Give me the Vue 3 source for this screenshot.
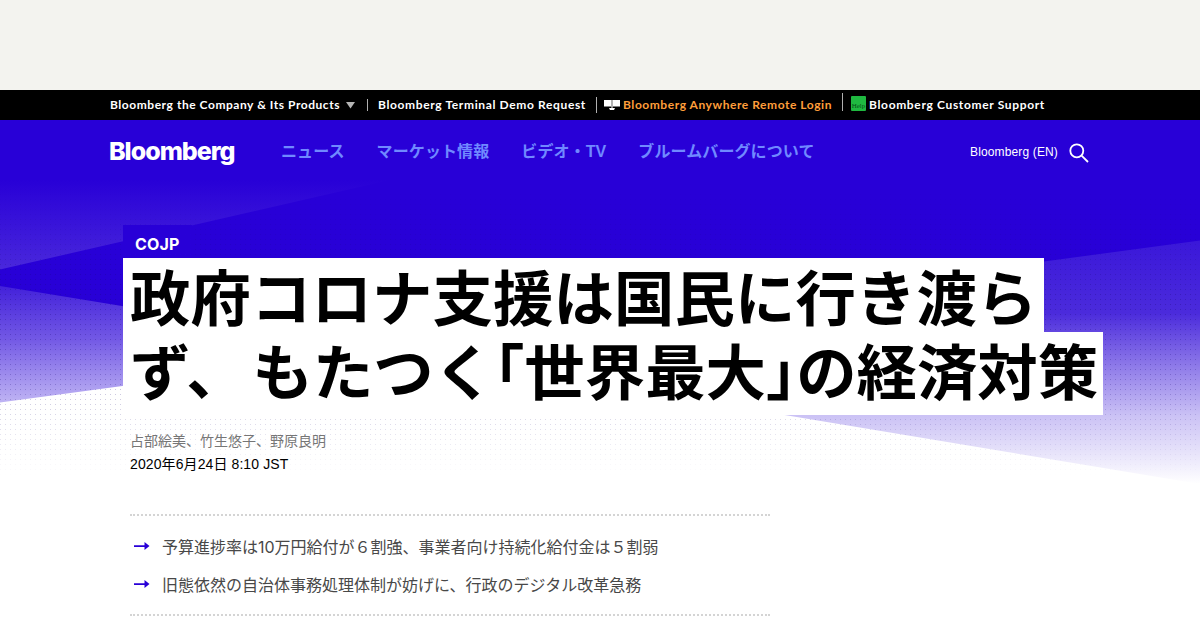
<script setup>
const navLinks = ['ニュース', 'マーケット情報', 'ビデオ・TV', 'ブルームバーグについて']

const highlights = [
  '予算進捗率は10万円給付が６割強、事業者向け持続化給付金は５割弱',
  '旧態依然の自治体事務処理体制が妨げに、行政のデジタル改革急務',
]
</script>

<template>
  <div class="page">
    <div class="ad-slot"></div>

    <div class="topbar">
      <a class="top-link products">Bloomberg the Company &amp; Its Products</a>
      <svg class="caret" width="9" height="7" viewBox="0 0 9 7"><path d="M0 0h9L4.5 6.5z" fill="#b4b4b4"/></svg>
      <i class="divider short"></i>
      <a class="top-link demo">Bloomberg Terminal Demo Request</a>
      <i class="divider"></i>
      <svg class="monitor" width="16" height="10" viewBox="0 0 16 10">
        <path d="M0 0h7.700v6.500H0zM8.300 0H16v6.500H8.300z" fill="#fff"/>
        <path d="M7.500 6h1v2h-1zM5 8h6l-1 2H6z" fill="#fff"/>
      </svg>
      <a class="top-link anywhere">Bloomberg Anywhere Remote Login</a>
      <i class="divider tall"></i>
      <span class="help">Help</span>
      <a class="top-link support">Bloomberg Customer Support</a>
    </div>

    <div class="hero">
      <svg class="hero-bg" width="1200" height="370" viewBox="0 120 1200 370">
        <defs>
          <linearGradient id="fadeTop" gradientUnits="userSpaceOnUse" x1="0" y1="180" x2="0" y2="270">
            <stop offset="0" stop-color="#2800d7"/>
            <stop offset="1" stop-color="#4a28dc"/>
          </linearGradient>
          <linearGradient id="fadeLeft" gradientUnits="userSpaceOnUse" x1="0" y1="286" x2="0" y2="403">
            <stop offset="0" stop-color="#4321da"/>
            <stop offset=".45" stop-color="#7258e5"/>
            <stop offset="1" stop-color="#c0b5f4"/>
          </linearGradient>
          <linearGradient id="fadeRight" gradientUnits="userSpaceOnUse" x1="0" y1="240" x2="0" y2="484">
            <stop offset="0" stop-color="#3a17d9"/>
            <stop offset=".3" stop-color="#4b2bdc"/>
            <stop offset=".5" stop-color="#8974e8"/>
            <stop offset=".72" stop-color="#cbc2f5"/>
            <stop offset="1" stop-color="#fff"/>
          </linearGradient>
          <linearGradient id="dotFade" gradientUnits="userSpaceOnUse" x1="0" y1="180" x2="0" y2="476">
            <stop offset="0" stop-color="#fff" stop-opacity="0"/>
            <stop offset=".4" stop-color="#fff"/>
            <stop offset=".7" stop-color="#fff" stop-opacity=".8"/>
            <stop offset="1" stop-color="#fff" stop-opacity="0"/>
          </linearGradient>
          <pattern id="dots" width="5" height="5" patternUnits="userSpaceOnUse">
            <rect x="0" y="4" width="1" height="1" fill="#1a0a70" fill-opacity=".3"/>
          </pattern>
          <mask id="dotMask"><rect y="180" width="1200" height="296" fill="url(#dotFade)"/></mask>
        </defs>
        <path d="M0 120H1200V242L390 351L0 288z" fill="#2800d7"/>
        <path d="M0 286V402.500L390 350z" fill="url(#fadeLeft)"/>
        <path d="M390 349.500L1200 240.500V484z" fill="url(#fadeRight)"/>
        <path d="M0 180H390L0 269.500z" fill="url(#fadeTop)"/>
        <rect y="180" width="1200" height="296" fill="url(#dots)" mask="url(#dotMask)"/>
      </svg>

      <header class="navbar">
        <span class="logo">Bloomberg</span>
        <nav class="nav-links">
          <a v-for="link in navLinks" :key="link">{{ link }}</a>
        </nav>
        <span class="edition">Bloomberg (EN)</span>
        <svg class="search" width="20" height="20" viewBox="0 0 20 20" fill="none" stroke="#fff" stroke-width="1.800">
          <circle cx="7.800" cy="7.800" r="6.500"/>
          <path d="M12.600 12.600L19 19"/>
        </svg>
      </header>

      <article class="article">
        <div class="eyebrow">COJP</div>
        <h1 class="headline">
          <span class="line first">政府コロナ支援は国民に行き渡ら</span>
          <span class="line second">ず、<span class="kana">もたつく</span><span class="half">「</span>世界最大<span class="half">」</span>の経済対策</span>
        </h1>
        <div class="authors">占部絵美、竹生悠子、野原良明</div>
        <div class="date">2020年6月24日 8:10 JST</div>
        <ul class="highlights">
          <li v-for="item in highlights" :key="item">
            <svg width="16" height="10" viewBox="0 0 16 10">
              <path d="M0 4.200h10.500V1L15.500 5l-5 4V5.900H0z" fill="#2800d7"/>
            </svg>
            <span>{{ item }}</span>
          </li>
        </ul>
      </article>
    </div>
  </div>
</template>

<style>
body {
  margin: 0;
  background: #fff;
}
</style>

<style scoped>
.page {
  width: 1200px;
  height: 630px;
  overflow: hidden;
  background: #fff;
  font-family: "Liberation Sans", "Noto Sans CJK JP", sans-serif;
}

.ad-slot { height: 90px; background: #f3f3ef; }

.topbar {
  display: flex;
  align-items: center;
  box-sizing: border-box;
  height: 30px;
  padding-left: 110px;
  background: #000;
}
.top-link {
  flex: none;
  color: #fff;
  font: 700 12px/30px Lato, sans-serif;
  letter-spacing: 0.54px;
  white-space: nowrap;
}
.products { width: 236px; }
.demo { width: 218px; letter-spacing: 0.63px; }
.anywhere { width: 219px; letter-spacing: 0.55px; color: #ff9e3a; }
.support { letter-spacing: 0.65px; }
.divider { width: 1px; height: 16px; background: #b0b0b0; }
.divider.short { height: 12px; margin: 0 10px 0 12px; }
.divider.tall { height: 18px; margin-bottom: 6px; }
.monitor { margin-right: 3px; margin-left: 7px; }
.help {
  width: 15px;
  height: 15px;
  margin: 0 3px 4px 8px;
  border-radius: 1px;
  background: #1fb840;
  color: #07501a;
  font: 7px/20px "Liberation Serif", serif;
  text-align: center;
}

.hero { position: relative; }
.hero-bg { position: absolute; top: 0; left: 0; }

.navbar {
  position: relative;
  display: flex;
  align-items: center;
  height: 64px;
  padding: 0 111px 0 109px;
}
.logo {
  width: 172px;
  margin-top: -3px;
  color: #fff;
  font: 800 25px/60px Inter, sans-serif;
  letter-spacing: -1px;
}
.nav-links {
  display: flex;
  flex: 1;
  gap: 32px;
  margin-top: -4px;
  color: #7089ff;
  font-size: 16px;
  font-weight: 700;
  letter-spacing: 0.1px;
}
.edition { margin-right: 11px; color: #fff; font-size: 12px; letter-spacing: 0.14px; }
.search { margin-top: 1px; }

.article {
  position: relative;
  padding: 41px 0 0 123px;
}
.eyebrow {
  box-sizing: border-box;
  width: 69px;
  height: 33px;
  padding: 3px 0 0 12px;
  background: #2800d7;
  color: #fff;
  font: 700 16px/33px Inter, sans-serif;
  letter-spacing: 0.2px;
}
.headline {
  display: flex;
  flex-direction: column;
  align-items: flex-start;
  margin: 0;
  font: 700 60.4px/74px "Noto Sans CJK JP", sans-serif;
}
.line {
  box-sizing: border-box;
  padding-left: 7px;
  background: #fff;
  color: #000;
  white-space: nowrap;
}
.first { width: 921px; height: 74px; letter-spacing: 0.1px; }
.second { width: 980px; height: 83px; }
.kana { margin-left: 6px; }
.half { font-feature-settings: "halt"; }

.authors {
  margin: 15px 0 0 7px;
  color: #767676;
  font-size: 14px;
  line-height: 23px;
}
.date { margin-left: 7px; font-size: 14px; line-height: 23px; letter-spacing: 0.1px; }

.highlights {
  box-sizing: border-box;
  width: 640px;
  height: 102px;
  margin: 38px 0 0 7px;
  padding: 12px 0 0;
  border-top: 2px dotted #d4d4d4;
  border-bottom: 2px dotted #d4d4d4;
  color: #484848;
  font: 400 16px/36px Inter, "Noto Sans CJK JP", sans-serif;
  list-style: none;
}
.highlights li {
  display: flex;
  align-items: center;
  gap: 12px;
  height: 38px;
  padding-left: 4px;
}
.highlights svg { margin-top: -2px; }
.highlights span { margin-top: -1px; }
</style>
